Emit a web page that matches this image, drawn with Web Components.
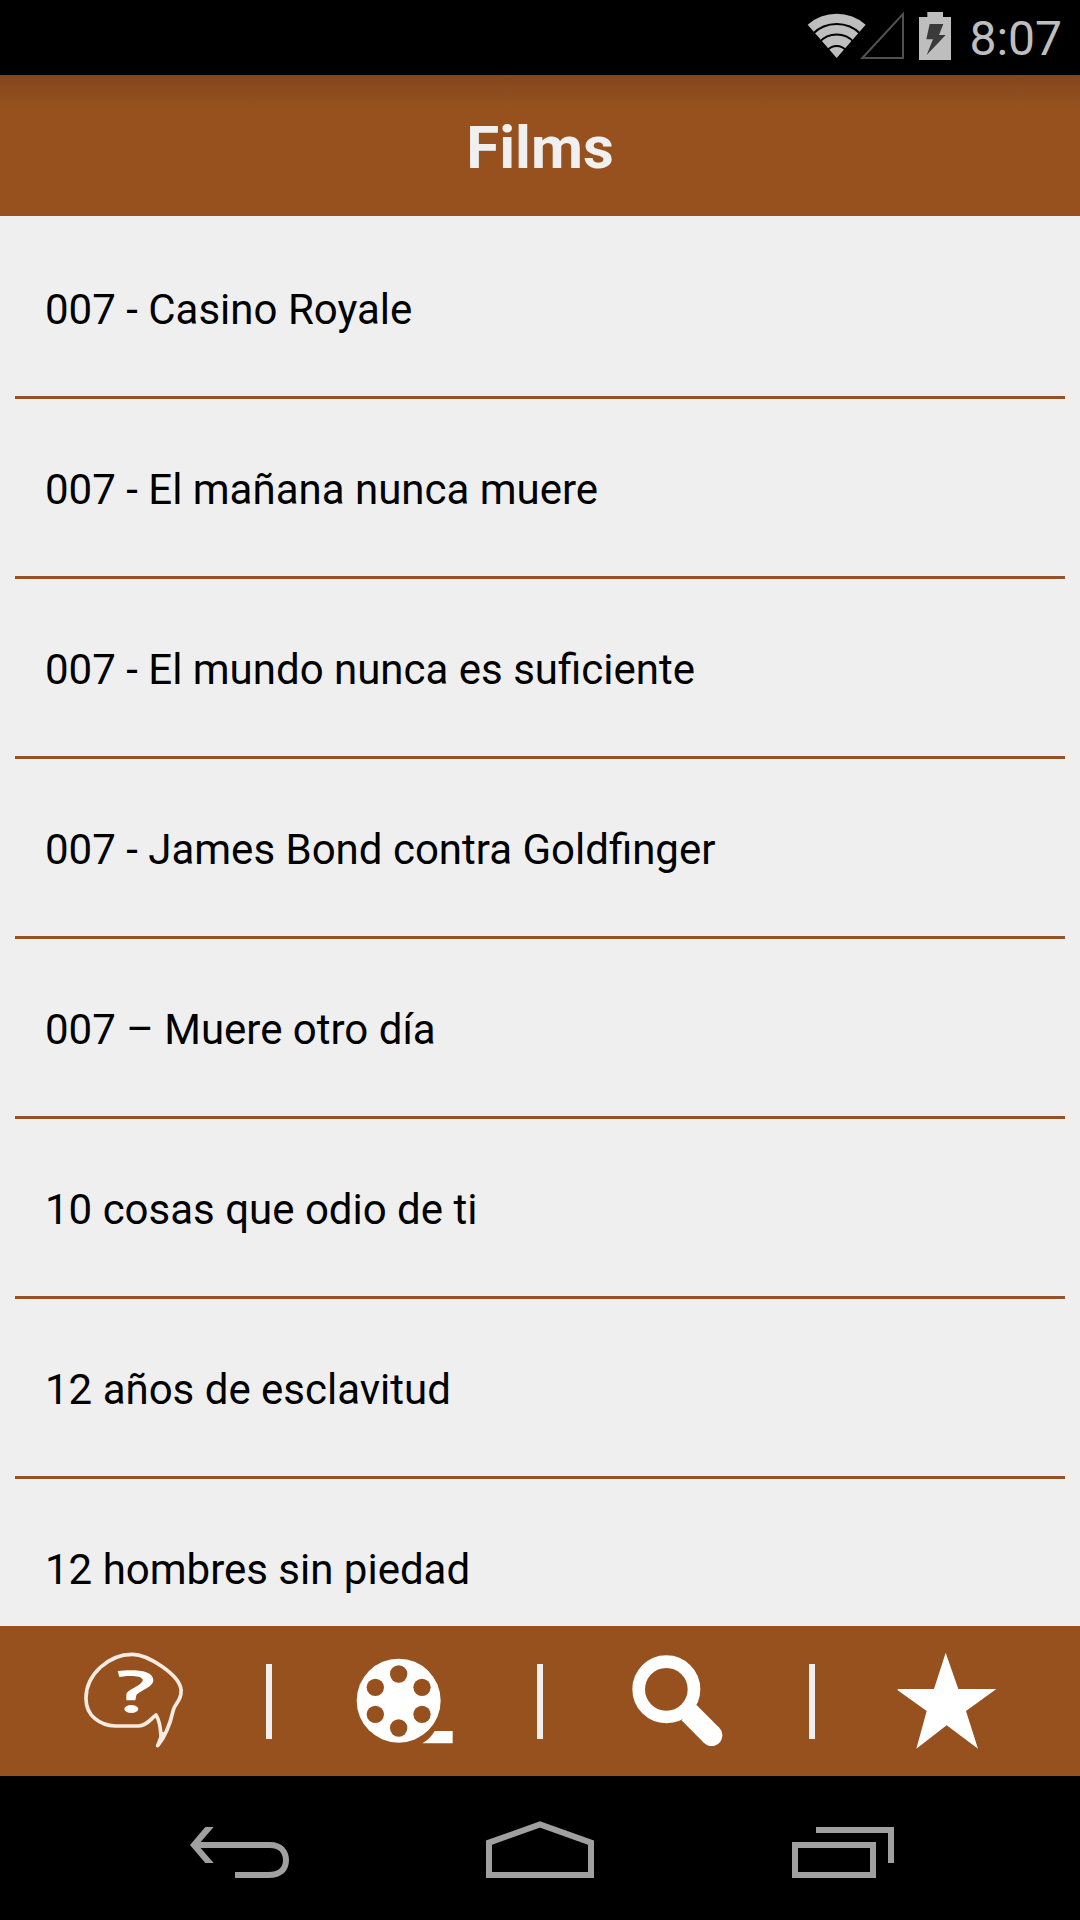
<!DOCTYPE html>
<html lang="es">
<head>
<meta charset="utf-8">
<meta name="viewport" content="width=device-width, initial-scale=1">
<title>Films</title>
<style>
    body {
        margin: 0;
        background: #000000;
        font-family: Roboto, "Liberation Sans", sans-serif;
    }
</style>
</head>
<body>
<films-app></films-app>

<script>
class StatusBar extends HTMLElement {
    constructor() {
        super();
        this.attachShadow({ mode: 'open' });
    }

    connectedCallback() {
        this.shadowRoot.innerHTML = `
            <style>
                :host {
                    display: flex;
                    justify-content: flex-end;
                    align-items: center;
                    gap: 15px;
                    height: 75px;
                    padding: 0 18px;
                    background: #000000;
                    color: #bebebe;
                }

                svg {
                    display: block;
                    height: 51px;
                }

                .clock {
                    padding: 3px 0 0 3px;
                    font-size: 48px;
                    line-height: 56px;
                }
            </style>
            <svg width="98" viewBox="78 36 294 153" role="img" aria-label="Wi-Fi">
                <path fill="#bebebe" d="M170 174 L83 74 A132 132 0 0 1 257 74 Z"/>
                <g fill="none" stroke="#000000" stroke-width="6">
                    <path d="M98 102 A102 102 0 0 1 242 102"/>
                    <path d="M118 127 A70 70 0 0 1 222 127"/>
                    <path d="M142 151 A36 36 0 0 1 198 151"/>
                </g>
                <path fill="none" stroke="#505050" stroke-width="6" d="M247 174 L369 42 V174 Z"/>
            </svg>
            <svg width="32" viewBox="417 36 96 153" role="img" aria-label="Batería">
                <path fill="#bebebe" d="M442 36 H489 V51 H513 V180 H417 V51 H442 Z"/>
                <path fill="#3a3a3a" d="M449 72 H490 L477 105 H497 L440 165 L459 118 H439 Z"/>
            </svg>
            <div class="clock"><slot></slot></div>
        `;
    }
}

class TitleBar extends HTMLElement {
    constructor() {
        super();
        this.attachShadow({ mode: 'open' });
    }

    connectedCallback() {
        this.shadowRoot.innerHTML = `
            <style>
                :host {
                    display: flex;
                    justify-content: center;
                    align-items: center;
                    box-sizing: border-box;
                    height: 141px;
                    padding-top: 4px;
                    background: linear-gradient(#83461b, #96511f 32px);
                    color: #f0f0f0;
                }

                h1 {
                    margin: 0;
                    font-size: 60px;
                    line-height: 70px;
                    font-weight: 700;
                }
            </style>
            <h1><slot></slot></h1>
        `;
    }
}

class FilmItem extends HTMLElement {
    constructor() {
        super();
        this.attachShadow({ mode: 'open' });
    }

    connectedCallback() {
        this.shadowRoot.innerHTML = `
            <style>
                :host {
                    display: block;
                    border-bottom: 3px solid #93522a;
                }

                a {
                    display: block;
                    padding: 66px 30px 61px;
                    color: #000000;
                    font-size: 42px;
                    line-height: 50px;
                    text-decoration: none;
                }
            </style>
            <a href="#"><slot></slot></a>
        `;
    }
}

class FilmList extends HTMLElement {
    constructor() {
        super();
        this.attachShadow({ mode: 'open' });
    }

    connectedCallback() {
        this.shadowRoot.innerHTML = `
            <style>
                :host {
                    display: block;
                    padding: 3px 15px 0;
                    overflow-y: auto;
                    scrollbar-width: none;
                    background: #efefef;
                }
            </style>
            <slot></slot>
        `;
    }
}

const TAB_ICONS = {
    quiz: `
        <svg viewBox="68 123 300 300">
            <path fill="none" stroke="#f8ebe2" stroke-width="11" stroke-linejoin="round" d="M216 133 C145 133 76 194 77 266 C77 318 120 347 165 348 H235 C262 346 270 327 287 315 C297 330 301 350 302 382 L292 407 C316 378 330 340 339 300 C344 280 365 270 362 240 C359 195 262 133 216 133 Z"/>
            <path fill="#f8ebe2" d="M299 364 L316 368 L291 412 Z"/>
            <path d="M172 183 C215 178 278 178 279 210 C279 232 240 240 228 256 L225 271 H198 V252 C205 236 250 226 247 208 C244 197 205 195 177 201 Z"/>
            <ellipse cx="213" cy="297" rx="21" ry="12"/>
        </svg>`,
    films: `
        <svg viewBox="103 123 300 300">
            <circle cx="237" cy="272" r="126"/>
            <g fill="#96511f">
                <circle cx="237" cy="192" r="26"/>
                <circle cx="307" cy="232" r="26"/>
                <circle cx="307" cy="313" r="26"/>
                <circle cx="237" cy="354" r="26"/>
                <circle cx="167" cy="313" r="26"/>
                <circle cx="167" cy="232" r="26"/>
            </g>
            <path d="M345 363 H399 V400 H308 C325 390 337 378 345 363 Z"/>
        </svg>`,
    search: `
        <svg viewBox="77 123 300 300">
            <circle cx="198" cy="238" r="83" fill="none" stroke="#ffffff" stroke-width="38"/>
            <path d="M266 308 L334 376" fill="none" stroke="#ffffff" stroke-width="64"/>
            <circle cx="334" cy="376" r="32"/>
        </svg>`,
    favourites: `
        <svg viewBox="172 123 300 300">
            <path d="M318 128 L356 237 H470 L379 303 L415 416 L321 346 L230 416 L261 303 L174 241 V237 H283 Z"/>
        </svg>`
};

class TabBar extends HTMLElement {
    constructor() {
        super();
        this.attachShadow({ mode: 'open' });
    }

    connectedCallback() {
        const tabs = [
            { icon: 'quiz', label: 'Preguntas' },
            { icon: 'films', label: 'Películas' },
            { icon: 'search', label: 'Buscar' },
            { icon: 'favourites', label: 'Favoritos' }
        ];

        this.shadowRoot.innerHTML = `
            <style>
                :host {
                    display: block;
                    background: #96511f;
                }

                nav {
                    display: flex;
                    align-items: center;
                    height: 150px;
                }

                button {
                    flex: 1;
                    display: flex;
                    justify-content: center;
                    padding: 0;
                    border: none;
                    background: none;
                    cursor: pointer;
                }

                svg {
                    display: block;
                    width: 100px;
                    height: 100px;
                    fill: #ffffff;
                }

                .divider {
                    width: 6px;
                    height: 75px;
                    background: #f0f0f0;
                }
            </style>
            <nav>
                ${tabs.map(tab => `<button type="button" aria-label="${tab.label}">${TAB_ICONS[tab.icon]}</button>`).join('<span class="divider"></span>')}
            </nav>
        `;
    }
}

class SystemNav extends HTMLElement {
    constructor() {
        super();
        this.attachShadow({ mode: 'open' });
    }

    connectedCallback() {
        this.shadowRoot.innerHTML = `
            <style>
                :host {
                    display: flex;
                    align-items: center;
                    height: 144px;
                    padding: 0 90px;
                    background: #000000;
                }

                button {
                    flex: 1;
                    display: flex;
                    justify-content: center;
                    padding: 0;
                    border: none;
                    background: none;
                    cursor: pointer;
                }

                svg {
                    display: block;
                    width: 108px;
                    height: 60px;
                }
            </style>
            <button type="button" aria-label="Atrás">
                <svg viewBox="78 84 324 180">
                    <path fill="#a0a0a0" d="M90 165 L136 111 H161 L122 156 H330 C367 156 387 180 387 210 C387 242 367 264 325 264 H225 V246 H325 C354 246 369 234 369 210 C369 187 354 174 330 174 H122 L161 219 H136 Z"/>
                </svg>
            </button>
            <button type="button" aria-label="Inicio">
                <svg viewBox="78 84 324 180">
                    <path fill="none" stroke="#a0a0a0" stroke-width="18" d="M87 158 L240 103 L393 158 V255 H87 Z"/>
                </svg>
            </button>
            <button type="button" aria-label="Recientes">
                <svg viewBox="78 84 324 180">
                    <path fill="none" stroke="#a0a0a0" stroke-width="18" d="M105 165 H339 V255 H105 Z M168 120 H393 V219"/>
                </svg>
            </button>
        `;
    }
}

class FilmsApp extends HTMLElement {
    constructor() {
        super();
        this.attachShadow({ mode: 'open' });
        this.films = [
            '007 - Casino Royale',
            '007 - El mañana nunca muere',
            '007 - El mundo nunca es suficiente',
            '007 - James Bond contra Goldfinger',
            '007 – Muere otro día',
            '10 cosas que odio de ti',
            '12 años de esclavitud',
            '12 hombres sin piedad'
        ];
    }

    connectedCallback() {
        this.shadowRoot.innerHTML = `
            <style>
                :host {
                    display: flex;
                    flex-direction: column;
                    height: 100vh;
                }

                status-bar, title-bar, tab-bar, system-nav {
                    flex: none;
                }

                /* Only the list scrolls, the bars stay in view */
                film-list {
                    flex: 1;
                    min-height: 0;
                }
            </style>
            <status-bar>8:07</status-bar>
            <title-bar>Films</title-bar>
            <film-list>
                ${this.films.map(film => `<film-item>${film}</film-item>`).join('')}
            </film-list>
            <tab-bar></tab-bar>
            <system-nav></system-nav>
        `;
    }
}

customElements.define('status-bar', StatusBar);
customElements.define('title-bar', TitleBar);
customElements.define('film-item', FilmItem);
customElements.define('film-list', FilmList);
customElements.define('tab-bar', TabBar);
customElements.define('system-nav', SystemNav);
customElements.define('films-app', FilmsApp);
</script>
</body>
</html>
